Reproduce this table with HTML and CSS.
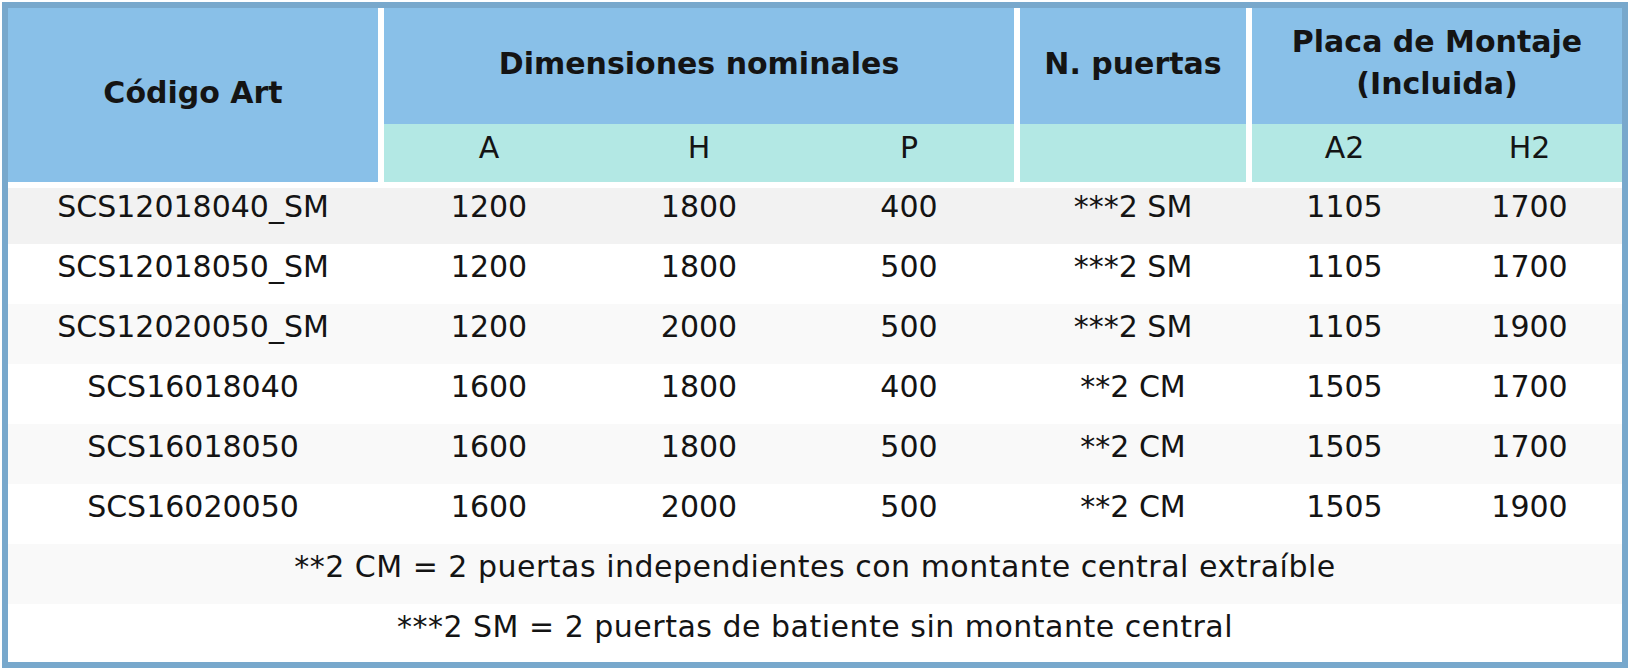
FILE: index.html
```html
<!DOCTYPE html>
<html lang="es">
<head>
<meta charset="utf-8">
<title>Tabla</title>
<link rel="stylesheet" href="styles.css">
</head>
<body>
<div class="table">
  <div class="head">
    <div class="h-code">Código Art</div>
    <div class="h-group g-dim">
      <div class="h-top">Dimensiones nominales</div>
      <div class="h-sub"><span class="c-dim">A</span><span class="c-dim">H</span><span class="c-dim">P</span></div>
    </div>
    <div class="h-group g-door">
      <div class="h-top">N. puertas</div>
      <div class="h-sub"></div>
    </div>
    <div class="h-group g-plate">
      <div class="h-top two">Placa de Montaje<br>(Incluida)</div>
      <div class="h-sub"><span class="c-pl">A2</span><span class="c-pl">H2</span></div>
    </div>
  </div>
  <div class="row first shade-a"><span class="c-code">SCS12018040_SM</span><span class="c-a">1200</span><span class="c-a">1800</span><span class="c-p">400</span><span class="c-n">***2 SM</span><span class="c-pl">1105</span><span class="c-pl">1700</span></div>
  <div class="row"><span class="c-code">SCS12018050_SM</span><span class="c-a">1200</span><span class="c-a">1800</span><span class="c-p">500</span><span class="c-n">***2 SM</span><span class="c-pl">1105</span><span class="c-pl">1700</span></div>
  <div class="row shade-b"><span class="c-code">SCS12020050_SM</span><span class="c-a">1200</span><span class="c-a">2000</span><span class="c-p">500</span><span class="c-n">***2 SM</span><span class="c-pl">1105</span><span class="c-pl">1900</span></div>
  <div class="row"><span class="c-code">SCS16018040</span><span class="c-a">1600</span><span class="c-a">1800</span><span class="c-p">400</span><span class="c-n">**2 CM</span><span class="c-pl">1505</span><span class="c-pl">1700</span></div>
  <div class="row shade-b"><span class="c-code">SCS16018050</span><span class="c-a">1600</span><span class="c-a">1800</span><span class="c-p">500</span><span class="c-n">**2 CM</span><span class="c-pl">1505</span><span class="c-pl">1700</span></div>
  <div class="row"><span class="c-code">SCS16020050</span><span class="c-a">1600</span><span class="c-a">2000</span><span class="c-p">500</span><span class="c-n">**2 CM</span><span class="c-pl">1505</span><span class="c-pl">1900</span></div>
  <div class="row note shade-b">**2 CM = 2 puertas independientes con montante central extraíble</div>
  <div class="row note last">***2 SM = 2 puertas de batiente sin montante central</div>
</div>
</body>
</html>
```
FILE: styles.css
```css
html, body {
  margin: 0;
  padding: 0;
  background: #ffffff;
}
body {
  font-family: "DejaVu Sans", "Liberation Sans", sans-serif;
  font-size: 30px;
  line-height: 36px;
  color: #141414;
}
.table {
  box-sizing: border-box;
  width: 1626px;
  margin: 2px 0 0 2px;
  border: 6px solid #78a8cc;
  background: #ffffff;
}
.head {
  display: flex;
  gap: 6px;
  padding-bottom: 6px;
  background: #ffffff;
  font-weight: bold;
}
.h-code {
  box-sizing: border-box;
  width: 370px;
  height: 174px;
  padding-top: 67px;
  background: #89c0e8;
  text-align: center;
}
.h-group {
  display: flex;
  flex-direction: column;
}
.g-dim { width: 630px; }
.g-door { width: 226px; }
.g-plate { width: 370px; }
.h-top {
  box-sizing: border-box;
  height: 116px;
  padding-top: 38px;
  background: #89c0e8;
  text-align: center;
}
.h-top.two {
  padding-top: 13px;
  line-height: 42px;
}
.h-sub {
  box-sizing: border-box;
  display: flex;
  height: 58px;
  padding-top: 6px;
  background: #b3e8e4;
  font-weight: normal;
}
.h-sub span, .row span {
  box-sizing: border-box;
  text-align: center;
  white-space: nowrap;
}
.c-dim { width: 210px; }
.c-code { width: 376px; padding-right: 6px; }
.c-a { width: 210px; }
.c-p { width: 216px; padding-right: 6px; }
.c-n { width: 232px; padding-right: 6px; }
.c-pl { width: 185px; }
.row {
  box-sizing: border-box;
  display: flex;
  height: 60px;
  padding-top: 5px;
  background: #ffffff;
}
.row.first {
  height: 56px;
  padding-top: 1px;
}
.row.last {
  height: 58px;
}
.shade-a { background: #f2f2f2; }
.shade-b { background: #f9f9f9; }
.row.note {
  justify-content: center;
  white-space: nowrap;
  letter-spacing: 0.5px;
}
```
